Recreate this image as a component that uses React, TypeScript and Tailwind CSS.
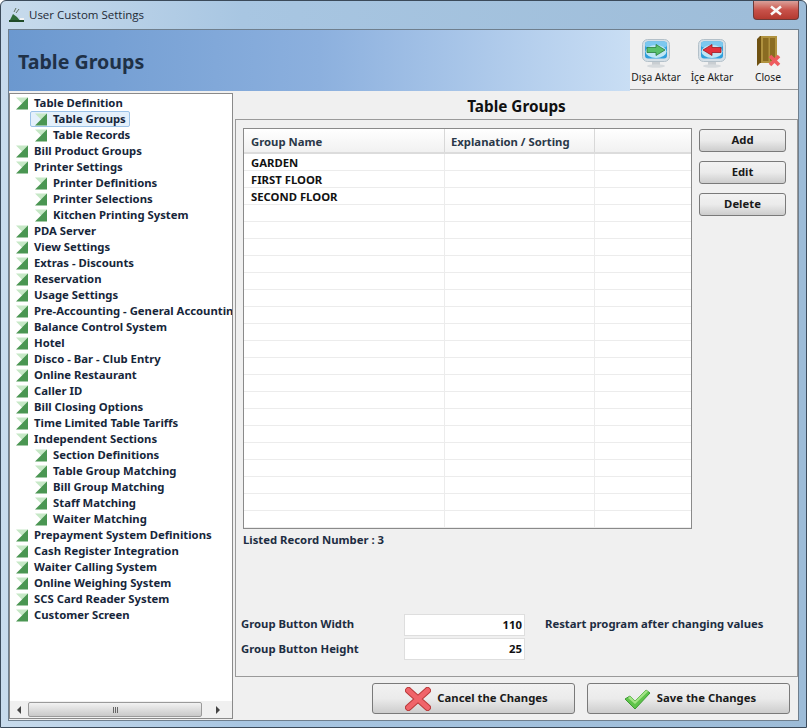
const F = "font-['Noto_Sans',sans-serif]";

function TreeIcon() {
  return (
    <svg width="12" height="13" viewBox="0 0 12 13" className="shrink-0">
      <polygon points="0,0.5 12,0.5 6,6.5" fill="#c6e8c6" />
      <polygon points="12,0.5 12,8 6,6.5" fill="#8cc78f" />
      <polygon points="0,12.5 6,6.5 12,0.5 12,12.5" fill="#4a9652" />
    </svg>
  );
}

const tree: [string, number][] = [
  ["Table Definition", 0], ["Table Groups", 1], ["Table Records", 1], ["Bill Product Groups", 0],
  ["Printer Settings", 0], ["Printer Definitions", 1], ["Printer Selections", 1], ["Kitchen Printing System", 1],
  ["PDA Server", 0], ["View Settings", 0], ["Extras - Discounts", 0], ["Reservation", 0], ["Usage Settings", 0],
  ["Pre-Accounting - General Accounting", 0], ["Balance Control System", 0], ["Hotel", 0], ["Disco - Bar - Club Entry", 0],
  ["Online Restaurant", 0], ["Caller ID", 0], ["Bill Closing Options", 0], ["Time Limited Table Tariffs", 0],
  ["Independent Sections", 0], ["Section Definitions", 1], ["Table Group Matching", 1], ["Bill Group Matching", 1],
  ["Staff Matching", 1], ["Waiter Matching", 1], ["Prepayment System Definitions", 0], ["Cash Register Integration", 0],
  ["Waiter Calling System", 0], ["Online Weighing System", 0], ["SCS Card Reader System", 0], ["Customer Screen", 0],
];

function Btn({ children, cls }: { children: React.ReactNode; cls: string }) {
  return (
    <div className={`flex items-center justify-center rounded-[3px] border border-[#7a7a7a] bg-gradient-to-b from-[#f2f2f2] via-[#ebebeb] to-[#cdcdcd] font-bold text-[#1a1a1a] ${cls}`}>
      {children}
    </div>
  );
}

function Monitor({ dir }: { dir: "r" | "l" }) {
  return (
    <svg width="28" height="29" viewBox="0 0 28 29">
      <rect x="10" y="21" width="8" height="5" fill="#c9ced2" />
      <ellipse cx="14" cy="27" rx="9" ry="1.8" fill="#d6dadd" />
      <rect x="0.5" y="0.5" width="27" height="22" rx="5" fill="#d5dfe6" stroke="#b3c0c9" />
      <rect x="3" y="2.5" width="22" height="17" rx="3" fill="#2f9fdc" />
      <rect x="3" y="2.5" width="22" height="6" rx="3" fill="#7cc8ef" />
      <ellipse cx="14" cy="12.5" rx="10.5" ry="6.5" fill="#bfe6f4" />
      {dir === "r" ? (
        <polygon points="5,8.5 14,8.5 14,5.5 23,11 14,16.5 14,13.5 5,13.5" fill="#58c06a" stroke="#2a7d3c" strokeWidth="0.8" strokeLinejoin="round" />
      ) : (
        <polygon points="23,8.5 14,8.5 14,5.5 5,11 14,16.5 14,13.5 23,13.5" fill="#e4313c" stroke="#9c1a22" strokeWidth="0.8" strokeLinejoin="round" />
      )}
    </svg>
  );
}

function Door() {
  return (
    <svg width="26" height="33" viewBox="0 0 26 33">
      <polygon points="2,3 5,0 22,0 22,27 5,27 2,30" fill="#6f5212" />
      <rect x="6" y="0" width="16" height="27" fill="#b0923f" />
      <rect x="8" y="2" width="5.5" height="23" fill="#8a6c22" />
      <rect x="15" y="2" width="5" height="23" fill="#8a6c22" />
      <path d="M15 20 L24 29 M24 20 L15 29" stroke="#ee5b5f" strokeWidth="3.6" />
    </svg>
  );
}

export default function App() {
  return (
    <div className={`${F} relative h-[728px] w-[807px] overflow-hidden rounded-t-[6px] border border-[#3b4a5a] bg-gradient-to-r from-[#c8dbec] via-[#a8c6e2] via-30% to-[#9dbcd8] text-[11.3px]`}>
      <div className="flex h-[28px] items-center pl-[7px]">
        <svg width="17" height="17" viewBox="0 0 17 17">
          <polygon points="1,15 5,7 9,10 13,15" fill="#2f6b3a" />
          <rect x="1" y="13" width="15" height="2" fill="#1f4a28" />
          <path d="M6 5 L8 1 M8 6 L11 2" stroke="#5d6f61" strokeWidth="1" />
          <rect x="12" y="11" width="4" height="2" fill="#f3f3f3" />
        </svg>
        <span className="ml-[4px] font-['Open_Sans',sans-serif] text-[11.5px] text-[#1e2a36]">User Custom Settings</span>
        <div className="ml-auto mr-[7px] -mt-[9px] flex h-[19px] w-[46px] items-center justify-center rounded-b-[4px] border border-t-0 border-[#6e3a38] bg-gradient-to-b from-[#d9a09a] via-[#c8524a] to-[#b43a30]">
          <svg width="14" height="11" viewBox="0 0 14 11">
            <path d="M2 1.5 L12 9.5 M12 1.5 L2 9.5" stroke="#f8f8f8" strokeWidth="2.6" />
          </svg>
        </div>
      </div>

      <div className="mx-[7px] flex h-[692px] flex-col border border-[#6f7f8e] bg-[#f0f0f0]">
        <div className="flex h-[63px] shrink-0">
          <div className="flex h-[61px] flex-1 items-center bg-gradient-to-r from-[#6b98cf] via-[#8cb0de] to-[#c9def4] pl-[9px] pt-[3px]">
            <span className="text-[19.6px] font-bold text-[#1f3147]">Table Groups</span>
          </div>
          <div className="flex h-[60px] w-[168px] border-b border-[#9a9a9a] bg-[#f0f0f0] text-[10.3px] text-[#1a1a1a]">
            <div className="flex w-[52px] flex-col items-center pt-[9px]"><Monitor dir="r" /><span className="mt-[2px] whitespace-nowrap leading-[14px]">Dışa Aktar</span></div>
            <div className="flex w-[60px] flex-col items-center pt-[9px]"><Monitor dir="l" /><span className="mt-[2px] whitespace-nowrap leading-[14px]">İçe Aktar</span></div>
            <div className="flex w-[52px] flex-col items-center pt-[6px]"><Door /><span className="mt-[1px] whitespace-nowrap leading-[14px]">Close</span></div>
          </div>
        </div>

        <div className="flex flex-1">
          <div className="flex h-[626px] w-[224px] flex-col border border-[#8a8a8a] bg-white">
            <div className="flex-1 overflow-hidden pt-[1px] font-bold text-[#16263a]">
              {tree.map(([t, lvl]) => (
                <div key={t} className={`flex h-[16px] items-center whitespace-nowrap ${lvl ? "pl-[25px]" : "pl-[6px]"}`}>
                  <div className={`flex h-[16px] items-center gap-[6px] ${t === "Table Groups" ? "-ml-[5px] rounded-[2px] border border-[#9cc3e8] bg-[#e4f0fb] pl-[4px] pr-[3px]" : ""}`}>
                    <TreeIcon />
                    <span>{t}</span>
                  </div>
                </div>
              ))}
            </div>
            <div className="flex h-[17px] items-center bg-[#f0f0f0] text-[#444]">
              <div className="flex w-[18px] justify-center">
                <svg width="5" height="8" viewBox="0 0 5 8"><polygon points="4,0 0,4 4,8" fill="#444" /></svg>
              </div>
              <div className="flex h-[15px] w-[174px] items-center justify-center rounded-[2px] border border-[#9a9a9a] bg-gradient-to-b from-[#f2f2f2] to-[#c9c9c9]">
                <div className="flex gap-[1px]"><i className="h-[6px] w-[1px] bg-[#666]" /><i className="h-[6px] w-[1px] bg-[#666]" /><i className="h-[6px] w-[1px] bg-[#666]" /></div>
              </div>
              <div className="flex flex-1 justify-center">
                <svg width="5" height="8" viewBox="0 0 5 8"><polygon points="1,0 5,4 1,8" fill="#444" /></svg>
              </div>
            </div>
          </div>

          <div className="ml-[2px] flex flex-1 flex-col font-bold text-[#1d2d42]">
            <div className="flex h-[26px] items-center justify-center pt-[1px] text-[15.3px] text-[#111]">Table Groups</div>
            <div className="flex h-[558px] flex-col border border-[#9a9a9a] px-[7px] pt-[8px]">
              <div className="flex gap-[7px]">
                <div className="flex h-[401px] w-[449px] flex-col border border-[#8a8a8a] bg-white">
                  <div className="flex h-[25px] shrink-0 border-b-2 border-[#dcdcdc] bg-gradient-to-b from-white to-[#f1f1f1] text-[#2a3848]">
                    <div className="flex w-[201px] items-center border-r border-[#d8d8d8] pl-[7px] pt-[4px]">Group Name</div>
                    <div className="flex w-[150px] items-center border-r border-[#d8d8d8] pl-[6px] pt-[4px]">Explanation / Sorting</div>
                  </div>
                  {["GARDEN", "FIRST FLOOR", "SECOND FLOOR", ...Array(19).fill("")].map((r, i) => (
                    <div key={i} className="flex h-[17px] shrink-0 border-b border-[#ececec] text-[#111]">
                      <div className="flex w-[201px] items-center border-r border-[#ececec] pl-[7px] pt-[3px]">{r}</div>
                      <div className="w-[150px] border-r border-[#ececec]" />
                    </div>
                  ))}
                </div>
                <div className="flex flex-col gap-[9px] pt-[1px]">
                  <Btn cls="h-[23px] w-[87px]">Add</Btn>
                  <Btn cls="h-[23px] w-[87px]">Edit</Btn>
                  <Btn cls="h-[23px] w-[87px]">Delete</Btn>
                </div>
              </div>
              <div className="mt-[3px] h-[16px] leading-[16px]">Listed Record Number : 3</div>
              <div className="-ml-[2px] mt-[66px] flex items-center">
                <span className="w-[163px] pb-[2px]">Group Button Width</span>
                <div className="flex h-[22px] w-[121px] items-center justify-end border border-[#dedede] bg-white pr-[2px] text-[#111]">110</div>
                <span className="ml-[20px] pb-[2px]">Restart program after changing values</span>
              </div>
              <div className="-ml-[2px] mt-[2px] flex items-center">
                <span className="w-[163px]">Group Button Height</span>
                <div className="flex h-[22px] w-[121px] items-center justify-end border border-[#dedede] bg-white pr-[2px] text-[#111]">25</div>
              </div>
            </div>
            <div className="flex flex-1 gap-[12px] pl-[137px] pt-[6px] text-[#1a1a1a]">
              <Btn cls="h-[31px] w-[203px] gap-[6px] pl-[6px]">
                <svg width="26" height="24" viewBox="0 0 26 24">
                  <path d="M3.5 3.5 L22.5 20.5 M22.5 3.5 L3.5 20.5" stroke="#b93a3a" strokeWidth="7" strokeLinecap="round" />
                  <path d="M3.5 3.5 L22.5 20.5 M22.5 3.5 L3.5 20.5" stroke="#f0646a" strokeWidth="5" strokeLinecap="round" />
                </svg>
                <span>Cancel the Changes</span>
              </Btn>
              <Btn cls="h-[31px] w-[203px] gap-[6px] pl-[2px]">
                <svg width="28" height="22" viewBox="0 0 28 22">
                  <path d="M2 11 L7 8 L12 13 L23 2 L27 5 L12 21 Z" fill="#5fc34a" stroke="#3c9a33" strokeWidth="1" />
                  <path d="M7 8 L12 13 L23 2 L25 3.5 L12 16 L5 10 Z" fill="#a4e487" />
                </svg>
                <span>Save the Changes</span>
              </Btn>
            </div>
          </div>
        </div>
      </div>
    </div>
  );
}
